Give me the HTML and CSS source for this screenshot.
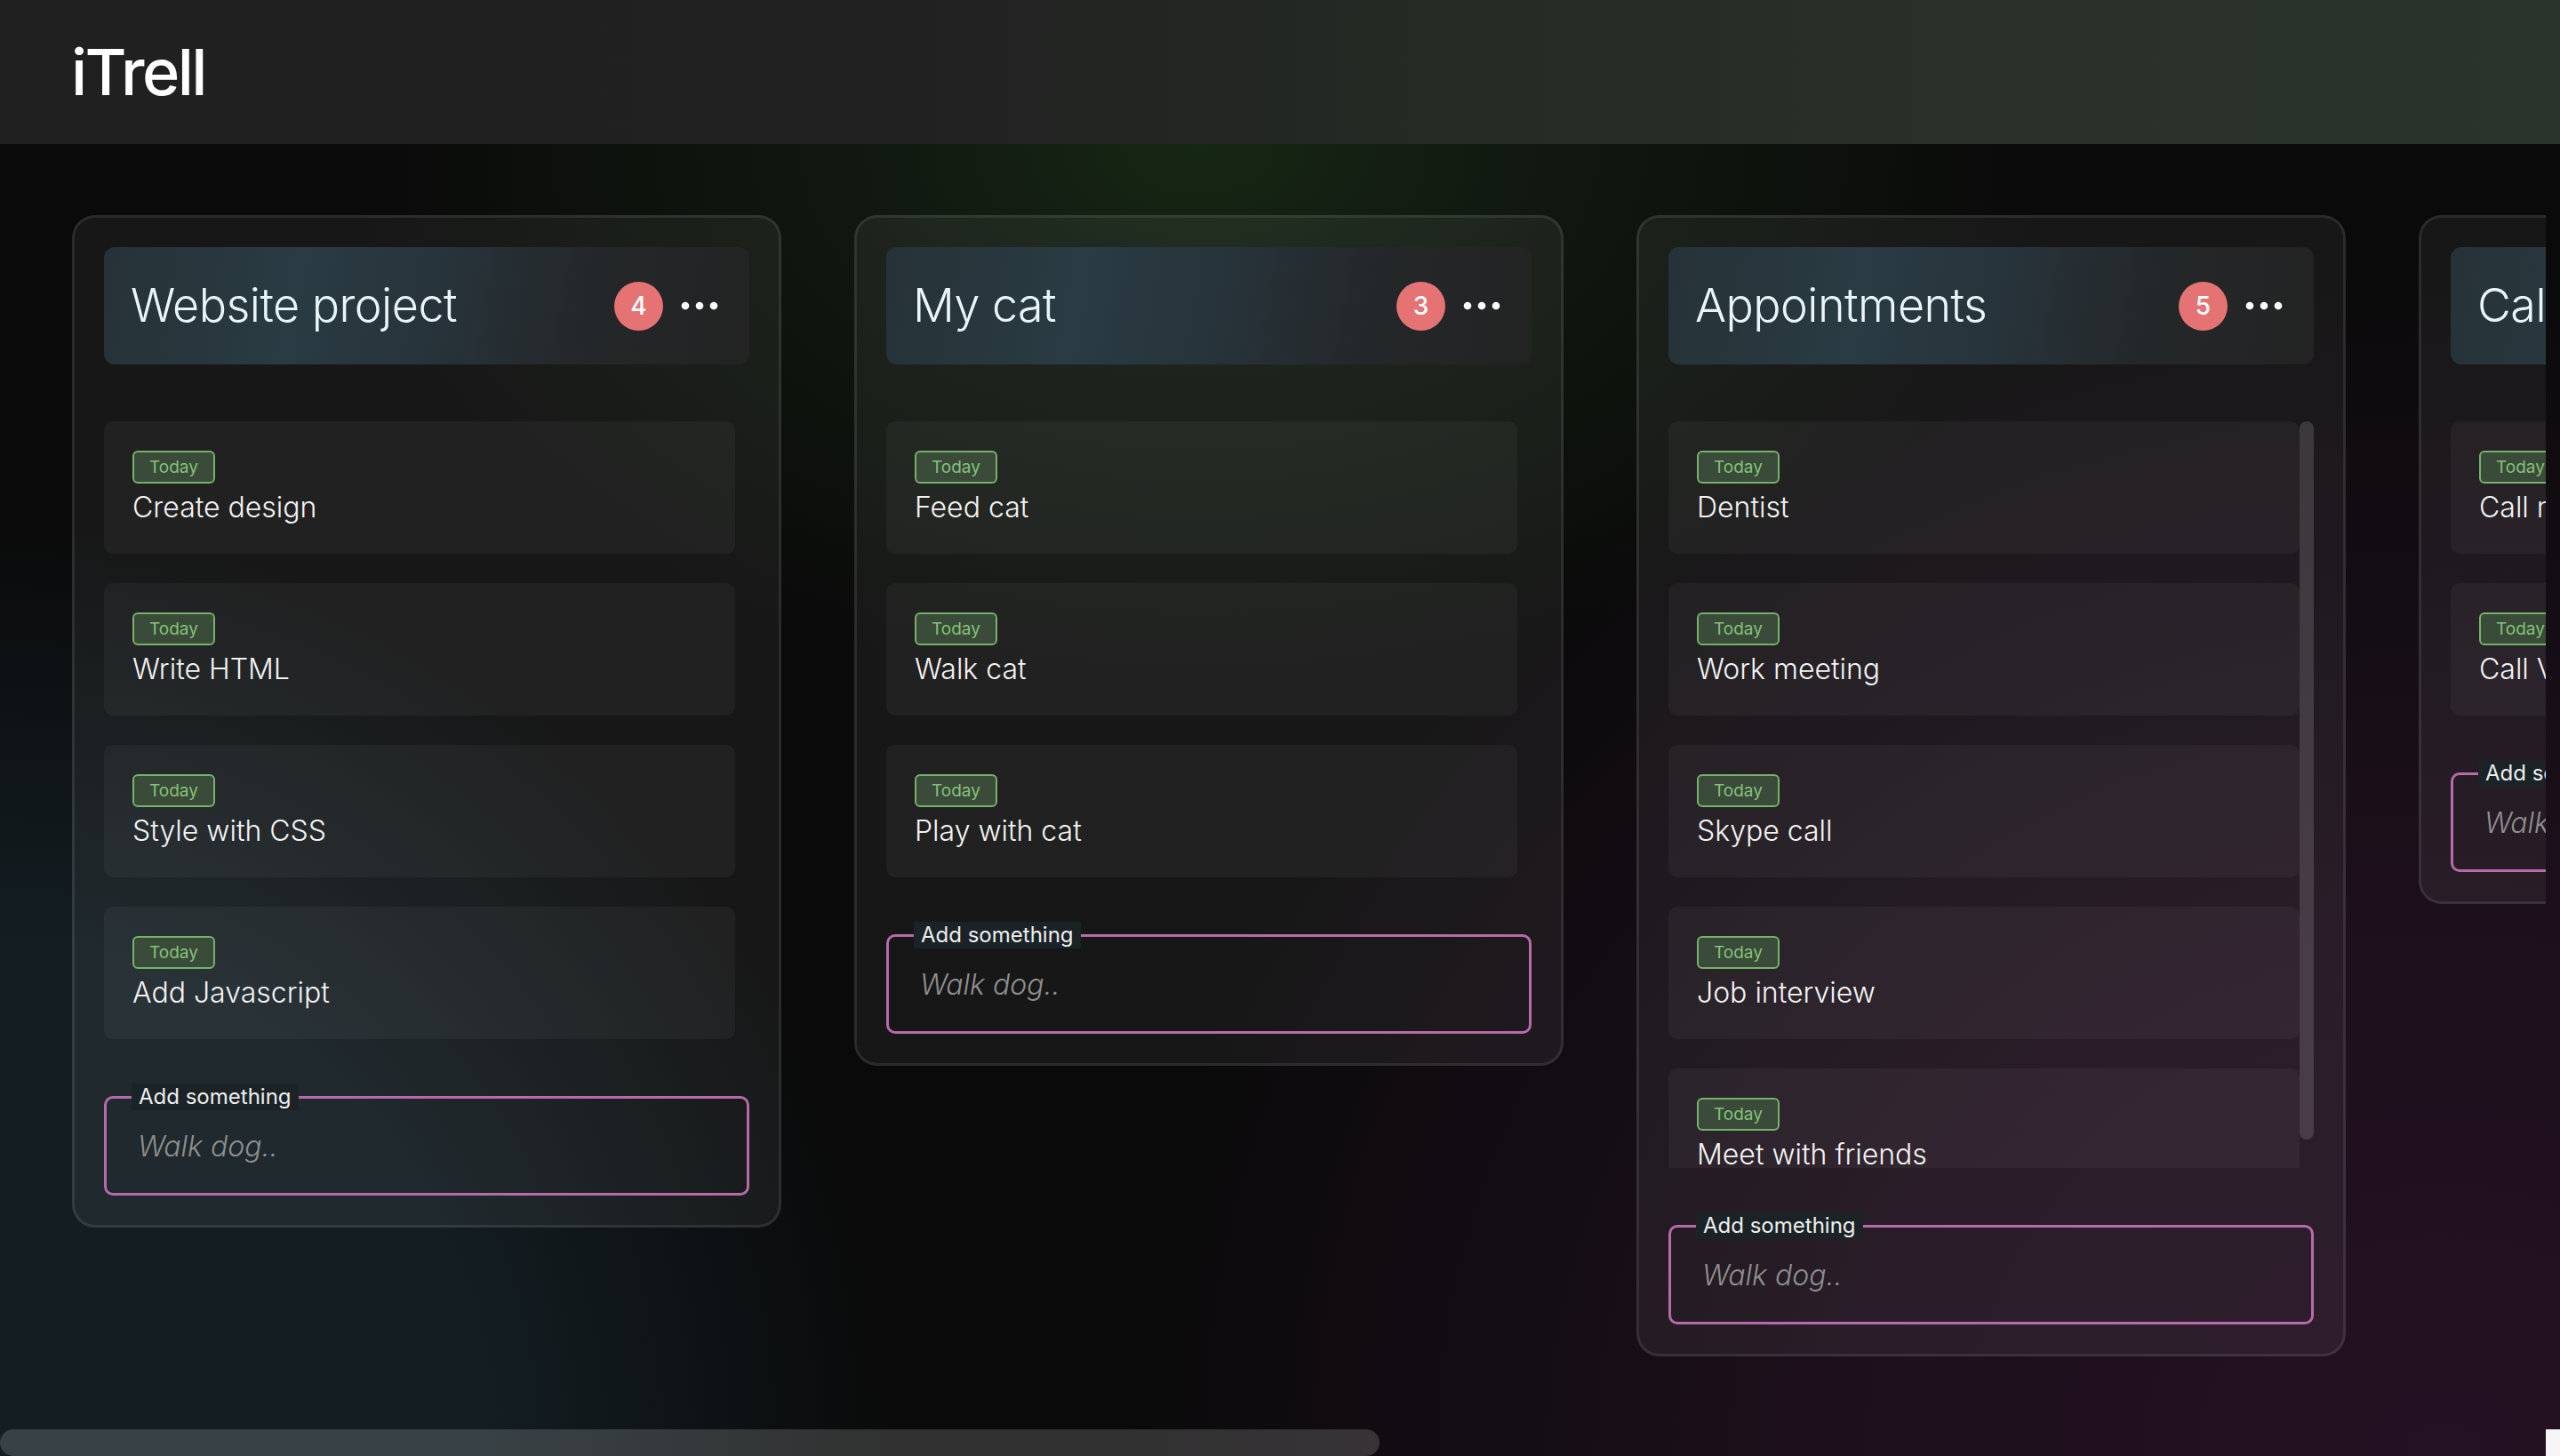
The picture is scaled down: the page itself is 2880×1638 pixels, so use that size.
FILE: index.html
```html
<!DOCTYPE html>
<html lang="en">
<head>
<meta charset="utf-8">
<title>iTrell</title>
<link rel="stylesheet" href="styles.css">
</head>
<body>
<header class="topbar">
  <h1 class="logo">iTrell</h1>
</header>
<div class="workspace">
  <main class="board">
    <section class="column">
      <div class="column-head">
        <h2 class="column-title">Website project</h2>
        <span class="count">4</span>
        <button class="more" aria-label="More"><svg viewBox="0 0 42 10" width="42" height="10"><circle cx="5" cy="5" r="4.3"/><circle cx="21" cy="5" r="4.3"/><circle cx="37" cy="5" r="4.3"/></svg></button>
      </div>
      <div class="card-scroll">
        <ul class="card-list">
          <li class="card"><span class="tag">Today</span><p class="card-title">Create design</p></li>
          <li class="card"><span class="tag">Today</span><p class="card-title">Write HTML</p></li>
          <li class="card"><span class="tag">Today</span><p class="card-title">Style with CSS</p></li>
          <li class="card"><span class="tag">Today</span><p class="card-title">Add Javascript</p></li>
        </ul>
        <div class="vtrack"></div>
      </div>
      <fieldset class="add"><legend class="add-label">Add something</legend><input class="add-input" type="text" placeholder="Walk dog.."></fieldset>
    </section>

    <section class="column">
      <div class="column-head">
        <h2 class="column-title">My cat</h2>
        <span class="count">3</span>
        <button class="more" aria-label="More"><svg viewBox="0 0 42 10" width="42" height="10"><circle cx="5" cy="5" r="4.3"/><circle cx="21" cy="5" r="4.3"/><circle cx="37" cy="5" r="4.3"/></svg></button>
      </div>
      <div class="card-scroll">
        <ul class="card-list">
          <li class="card"><span class="tag">Today</span><p class="card-title">Feed cat</p></li>
          <li class="card"><span class="tag">Today</span><p class="card-title">Walk cat</p></li>
          <li class="card"><span class="tag">Today</span><p class="card-title">Play with cat</p></li>
        </ul>
        <div class="vtrack"></div>
      </div>
      <fieldset class="add"><legend class="add-label">Add something</legend><input class="add-input" type="text" placeholder="Walk dog.."></fieldset>
    </section>

    <section class="column">
      <div class="column-head">
        <h2 class="column-title">Appointments</h2>
        <span class="count">5</span>
        <button class="more" aria-label="More"><svg viewBox="0 0 42 10" width="42" height="10"><circle cx="5" cy="5" r="4.3"/><circle cx="21" cy="5" r="4.3"/><circle cx="37" cy="5" r="4.3"/></svg></button>
      </div>
      <div class="card-scroll">
        <ul class="card-list">
          <li class="card"><span class="tag">Today</span><p class="card-title">Dentist</p></li>
          <li class="card"><span class="tag">Today</span><p class="card-title">Work meeting</p></li>
          <li class="card"><span class="tag">Today</span><p class="card-title">Skype call</p></li>
          <li class="card"><span class="tag">Today</span><p class="card-title">Job interview</p></li>
          <li class="card"><span class="tag">Today</span><p class="card-title">Meet with friends</p></li>
        </ul>
        <div class="vtrack"><div class="vthumb"></div></div>
      </div>
      <fieldset class="add"><legend class="add-label">Add something</legend><input class="add-input" type="text" placeholder="Walk dog.."></fieldset>
    </section>

    <section class="column">
      <div class="column-head">
        <h2 class="column-title">Calls</h2>
        <span class="count">2</span>
        <button class="more" aria-label="More"><svg viewBox="0 0 42 10" width="42" height="10"><circle cx="5" cy="5" r="4.3"/><circle cx="21" cy="5" r="4.3"/><circle cx="37" cy="5" r="4.3"/></svg></button>
      </div>
      <div class="card-scroll">
        <ul class="card-list">
          <li class="card"><span class="tag">Today</span><p class="card-title">Call mom</p></li>
          <li class="card"><span class="tag">Today</span><p class="card-title">Call Victor</p></li>
        </ul>
        <div class="vtrack"></div>
      </div>
      <fieldset class="add"><legend class="add-label">Add something</legend><input class="add-input" type="text" placeholder="Walk dog.."></fieldset>
    </section>

    <section class="column">
      <div class="column-head">
        <h2 class="column-title">Shopping</h2>
        <span class="count">2</span>
        <button class="more" aria-label="More"><svg viewBox="0 0 42 10" width="42" height="10"><circle cx="5" cy="5" r="4.3"/><circle cx="21" cy="5" r="4.3"/><circle cx="37" cy="5" r="4.3"/></svg></button>
      </div>
      <div class="card-scroll">
        <ul class="card-list">
          <li class="card"><span class="tag">Today</span><p class="card-title">Buy milk</p></li>
          <li class="card"><span class="tag">Today</span><p class="card-title">Buy bread</p></li>
        </ul>
        <div class="vtrack"></div>
      </div>
      <fieldset class="add"><legend class="add-label">Add something</legend><input class="add-input" type="text" placeholder="Walk dog.."></fieldset>
    </section>

    <section class="column">
      <div class="column-head">
        <h2 class="column-title">Ideas</h2>
        <span class="count">1</span>
        <button class="more" aria-label="More"><svg viewBox="0 0 42 10" width="42" height="10"><circle cx="5" cy="5" r="4.3"/><circle cx="21" cy="5" r="4.3"/><circle cx="37" cy="5" r="4.3"/></svg></button>
      </div>
      <div class="card-scroll">
        <ul class="card-list">
          <li class="card"><span class="tag">Today</span><p class="card-title">New side project</p></li>
        </ul>
        <div class="vtrack"></div>
      </div>
      <fieldset class="add"><legend class="add-label">Add something</legend><input class="add-input" type="text" placeholder="Walk dog.."></fieldset>
    </section>
  </main>
  <div class="side-track"></div>
  <div class="htrack"><div class="hthumb"></div></div>
  <div class="scroll-corner"></div>
</div>
</body>
</html>
```
FILE: styles.css
```css
* {
  box-sizing: border-box;
}

html,
body {
  margin: 0;
  height: 100%;
}

body {
  display: flex;
  flex-direction: column;
  overflow: hidden;
  background: #0a0a0a;
  color: #eeeeee;
  font-family: Inter, "Noto Sans", "Liberation Sans", sans-serif;
}

.topbar {
  flex: none;
  height: 162px;
  display: flex;
  align-items: center;
  padding-left: 80px;
  background: linear-gradient(90deg, #202020 0%, #212121 36%, #252b25 58%, #293129 80%, #2b342b 100%);
}

.logo {
  margin: 0;
  font-size: 72px;
  font-weight: 500;
  line-height: 1;
  letter-spacing: -0.035em;
  color: #ffffff;
}

/* board + fake scrollbars */
.workspace {
  flex: 1;
  min-height: 0;
  display: grid;
  grid-template-columns: 1fr 16px;
  grid-template-rows: 1fr 30px;
  overflow: hidden;
  background:
    radial-gradient(ellipse 950px 620px at 1350px 0px, rgba(24, 42, 22, 0.9) 0%, rgba(22, 36, 20, 0.55) 40%, rgba(20, 30, 20, 0) 100%),
    radial-gradient(ellipse 1000px 1050px at 0px 100%, rgba(19, 29, 34, 1) 0%, rgba(19, 29, 34, 1) 55%, rgba(19, 29, 34, 0) 100%),
    radial-gradient(ellipse 1500px 1350px at 2750px 100%, rgba(36, 17, 35, 1) 0%, rgba(34, 17, 33, 0.8) 45%, rgba(30, 15, 30, 0) 100%),
    #0a0a0a;
}

.board {
  grid-column: 1;
  grid-row: 1;
  min-width: 0;
  min-height: 0;
  display: flex;
  align-items: flex-start;
  gap: 82px;
  padding: 80px 0 0 81px;
  overflow: hidden;
}

.side-track {
  grid-column: 2;
  grid-row: 1;
}

.htrack {
  grid-column: 1;
  grid-row: 2;
  display: flex;
}

.hthumb {
  width: 54.2%;
  height: 30px;
  border-radius: 15px;
  background: rgba(255, 255, 255, 0.16);
}

.scroll-corner {
  grid-column: 2;
  grid-row: 2;
  background: #f6f6f6;
}

/* columns */
.column {
  flex: none;
  width: 798px;
  padding: 33px;
  border: 3px solid rgba(255, 255, 255, 0.09);
  border-radius: 26px;
  background: rgba(255, 255, 255, 0.055);
}

.column-head {
  height: 132px;
  display: flex;
  align-items: center;
  padding: 0 35px 0 30px;
  border-radius: 12px;
  background: linear-gradient(100deg, #263237 0%, #2a3b43 30%, #27333a 52%, #242729 75%, #232323 100%);
}

.column-title {
  flex: 1;
  margin: 0;
  font-size: 52px;
  font-weight: 300;
  line-height: 1.2;
  letter-spacing: -0.01em;
  color: #e9f5f9;
  white-space: nowrap;
}

.count {
  flex: none;
  width: 55px;
  height: 55px;
  display: flex;
  align-items: center;
  justify-content: center;
  border-radius: 50%;
  background: #e57373;
  color: #ffffff;
  font-size: 28px;
  font-weight: 500;
}

.more {
  flex: none;
  display: flex;
  margin-left: 20px;
  padding: 0;
  border: 0;
  background: none;
  fill: #ffffff;
}

.card-scroll {
  display: flex;
  margin-top: 64px;
}

.card-list {
  flex: 1;
  min-width: 0;
  display: flex;
  flex-direction: column;
  gap: 33px;
  max-height: 840px;
  margin: 0;
  padding: 0;
  list-style: none;
  overflow: hidden;
}

.vtrack {
  flex: none;
  width: 16px;
}

.vthumb {
  height: 808px;
  border-radius: 8px;
  background: rgba(255, 255, 255, 0.14);
}

.card {
  flex: none;
  display: flex;
  flex-direction: column;
  align-items: flex-start;
  height: 149px;
  padding: 33px 32px 32px;
  border-radius: 10px;
  background: rgba(255, 255, 255, 0.045);
}

.tag {
  height: 37px;
  padding: 0 17px;
  border: 2px solid #76b26c;
  border-radius: 6px;
  background: #3b4b39;
  color: #84c27a;
  font-size: 19px;
  line-height: 33px;
}

.card-title {
  margin: 7px 0 0;
  font-size: 32px;
  font-weight: 300;
  line-height: 40px;
  color: #f3f3f3;
  white-space: nowrap;
}

/* add input */
.add {
  margin: 50px 0 0;
  padding: 0 0 12px;
  border: 3px solid #b56ca9;
  border-radius: 10px;
  min-inline-size: 0;
}

.add-label {
  margin-left: 28px;
  padding: 0 8px;
  background: #1b2327;
  color: #eeeeee;
  font-size: 24px;
  line-height: 30px;
}

.add-input {
  display: block;
  width: 100%;
  height: 81px;
  padding: 0 35px;
  border: 0;
  outline: none;
  background: transparent;
  color: #dddddd;
  font-family: inherit;
  font-size: 32px;
  font-weight: 300;
  font-style: italic;
}

.add-input::placeholder {
  color: #8f8f8f;
  opacity: 1;
}
```
